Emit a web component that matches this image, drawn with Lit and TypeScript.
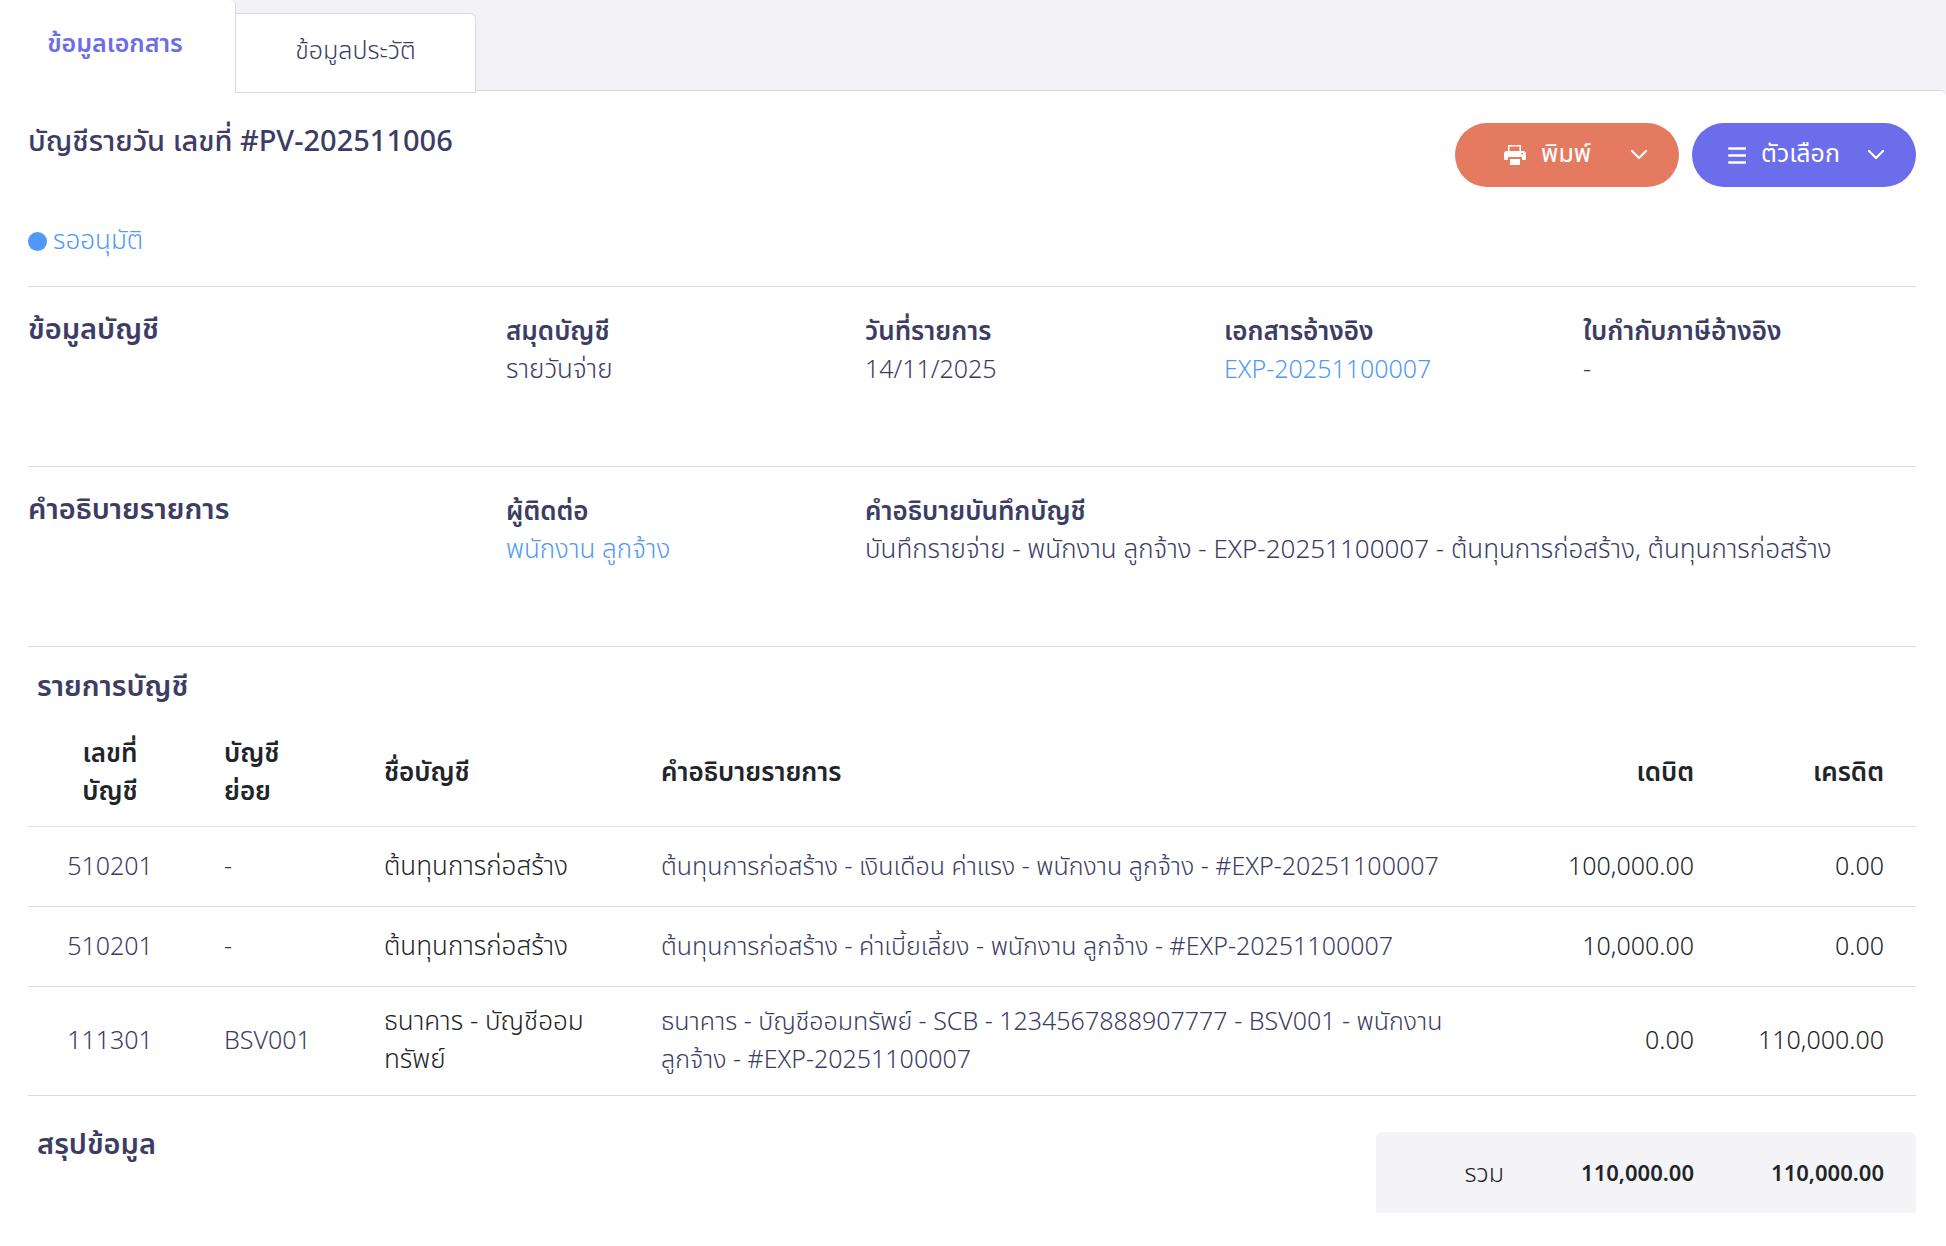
import { LitElement, html, css, svg } from "lit";
import { customElement } from "lit/decorators.js";

interface Entry {
  code: string;
  sub: string;
  name: string;
  description: string;
  debit: string;
  credit: string;
}

const entries: Entry[] = [
  {
    code: "510201",
    sub: "-",
    name: "ต้นทุนการก่อสร้าง",
    description: "ต้นทุนการก่อสร้าง - เงินเดือน ค่าแรง - พนักงาน ลูกจ้าง - #EXP-20251100007",
    debit: "100,000.00",
    credit: "0.00",
  },
  {
    code: "510201",
    sub: "-",
    name: "ต้นทุนการก่อสร้าง",
    description: "ต้นทุนการก่อสร้าง - ค่าเบี้ยเลี้ยง - พนักงาน ลูกจ้าง - #EXP-20251100007",
    debit: "10,000.00",
    credit: "0.00",
  },
  {
    code: "111301",
    sub: "BSV001",
    name: "ธนาคาร - บัญชีออมทรัพย์",
    description: "ธนาคาร - บัญชีออมทรัพย์ - SCB - 1234567888907777 - BSV001 - พนักงาน ลูกจ้าง - #EXP-20251100007",
    debit: "0.00",
    credit: "110,000.00",
  },
];

const printIcon = svg`<path fill="currentColor" fill-rule="evenodd" d="M4 0h13v6h2a3 3 0 0 1 3 3v5a1 1 0 0 1-1 1h-3v-3H4v3H1a1 1 0 0 1-1-1V9a3 3 0 0 1 3-3h1zM5.500 1.500V6h10V1.500zM17.500 8v1.500H19V8zM6 14h10v6H6z"/>`;
const menuIcon = svg`<path fill="none" stroke="currentColor" stroke-width="2.400" stroke-linecap="round" d="M1.200 2.500h16M1.200 9.500h16M1.200 16.500h16"/>`;
const chevronIcon = svg`<path fill="none" stroke="currentColor" stroke-width="2.200" stroke-linecap="round" stroke-linejoin="round" d="M1 1l7 7 7-7"/>`;

@customElement("app-root")
export class AppRoot extends LitElement {
  static styles = css`
    :host {
      display: flex;
      flex-direction: column;
      min-height: 100vh;
      background: #f3f2f7;
      color: #3c3c64;
      font-family: "Noto Sans", "Noto Sans Thai", "Noto Sans Thai UI", sans-serif;
      font-size: 25px;
      font-weight: 300;
      line-height: 38px;
    }
    * {
      box-sizing: border-box;
    }
    h1,
    h2,
    dl,
    dt,
    dd {
      margin: 0;
    }
    a {
      color: #5099fa;
      text-decoration: none;
    }
    .tabs {
      position: relative;
      display: flex;
      align-items: flex-start;
      height: 90px;
    }
    .tab {
      border: 0;
      background: #fff;
      color: inherit;
      font: inherit;
      cursor: pointer;
    }
    .tab.active {
      flex: 0 0 236px;
      height: 93px;
      padding: 0 5px 9px 0;
      border-right: 1px solid #d9d9e3;
      border-radius: 0 6px 0 0;
      color: #6c6dea;
      font-weight: 600;
    }
    .tab.idle {
      flex: 0 0 240px;
      height: 80px;
      margin-top: 13px;
      padding: 0 0 8px;
      border: 1px solid #d9d9e3;
      border-left: 0;
      border-radius: 0 6px 0 0;
    }
    .page {
      flex: 1;
      padding: 32px 30px 32px 28px;
      border-top: 1px solid #d9d9e3;
      border-radius: 0 6px 0 0;
      background: #fff;
    }
    .head {
      display: flex;
      justify-content: space-between;
      align-items: flex-start;
    }
    .title,
    .heading {
      font-size: 29px;
      font-weight: 600;
      line-height: 34px;
    }
    .title {
      font-weight: 500;
    }
    .actions {
      display: flex;
      gap: 13px;
    }
    .action {
      display: flex;
      align-items: center;
      justify-content: center;
      gap: 15px;
      width: 224px;
      height: 64px;
      padding: 0 32px 0 36px;
      border: 0;
      border-radius: 32px;
      color: #fff;
      font: inherit;
      font-weight: 400;
      cursor: pointer;
    }
    .action span {
      padding-bottom: 7px;
    }
    .print {
      background: #e47b61;
      padding-left: 49px;
    }
    .options {
      background: #6c6dea;
    }
    .chevron {
      margin-left: auto;
    }
    .status {
      display: flex;
      align-items: center;
      gap: 6px;
      padding: 37px 0 28px;
      color: #5099fa;
      font-size: 26px;
    }
    .status span {
      margin-top: -4px;
    }
    .status .dot {
      width: 19px;
      height: 19px;
      margin-top: 0;
      border-radius: 50%;
      background: #5099fa;
    }
    .section {
      display: grid;
      grid-template-columns: 452fr repeat(4, 333fr);
      column-gap: 26px;
      min-height: 180px;
      padding-top: 24px;
      border-top: 1px solid #d9d9e3;
    }
    .fields {
      display: contents;
    }
    .field {
      white-space: nowrap;
    }
    .field dt,
    .thai {
      font-size: 26px;
    }
    .field dt {
      font-weight: 600;
    }
    .wide {
      grid-column: span 3;
    }
    .lines {
      border-top: 1px solid #d9d9e3;
      padding-top: 21px;
    }
    .inset {
      padding-left: 9px;
    }
    table {
      width: 100%;
      border-collapse: separate;
      border-spacing: 0;
      table-layout: fixed;
      color: #212529;
    }
    .entries {
      margin-top: 14px;
    }
    th,
    td {
      height: 80px;
      padding: 14px 32px 18px;
      border-bottom: 1px solid #d9d9e3;
      text-align: left;
      font-weight: 300;
    }
    thead th {
      height: 111px;
      padding: 16px 32px;
      border-color: #e3e3e8;
      font-size: 26px;
      font-weight: 600;
    }
    .code {
      width: 164px;
      text-align: center;
    }
    .sub {
      width: 160px;
    }
    .name {
      width: 277px;
    }
    .money {
      width: 190px;
      text-align: right;
      padding-left: 0;
    }
    .soft {
      color: #3c3c64;
    }
    .summary {
      display: flex;
      justify-content: space-between;
      align-items: flex-start;
      padding-top: 36px;
    }
    .summary .heading {
      margin-top: -6px;
    }
    .total {
      width: 540px;
      border-radius: 6px 6px 0 0;
      background: #f4f4f6;
    }
    .total th,
    .total td {
      height: 81px;
      padding-top: 14px;
      padding-bottom: 16px;
      border: 0;
      text-align: right;
    }
    .total td {
      font-size: 22px;
      font-weight: 600;
    }
  `;

  render() {
    return html`
      <nav class="tabs" role="tablist" lang="th">
        <button class="tab active" role="tab" aria-selected="true">ข้อมูลเอกสาร</button>
        <button class="tab idle" role="tab" aria-selected="false">ข้อมูลประวัติ</button>
      </nav>
      <main class="page" lang="th">
        <header class="head">
          <h1 class="title">บัญชีรายวัน เลขที่ #PV-202511006</h1>
          <div class="actions">
            <button class="action print">
              <svg width="22" height="20" viewBox="0 0 22 20">${printIcon}</svg>
              <span>พิมพ์</span>
              <svg class="chevron" width="16" height="10" viewBox="0 0 16 10">${chevronIcon}</svg>
            </button>
            <button class="action options">
              <svg width="18" height="19" viewBox="0 0 18 19">${menuIcon}</svg>
              <span>ตัวเลือก</span>
              <svg class="chevron" width="16" height="10" viewBox="0 0 16 10">${chevronIcon}</svg>
            </button>
          </div>
        </header>
        <div class="status"><span class="dot"></span><span>รออนุมัติ</span></div>

        <section class="section">
          <h2 class="heading">ข้อมูลบัญชี</h2>
          <dl class="fields">
            <div class="field"><dt>สมุดบัญชี</dt><dd class="thai">รายวันจ่าย</dd></div>
            <div class="field"><dt>วันที่รายการ</dt><dd>14/11/2025</dd></div>
            <div class="field"><dt>เอกสารอ้างอิง</dt><dd><a href="#EXP-20251100007">EXP-20251100007</a></dd></div>
            <div class="field"><dt>ใบกำกับภาษีอ้างอิง</dt><dd>-</dd></div>
          </dl>
        </section>

        <section class="section">
          <h2 class="heading">คำอธิบายรายการ</h2>
          <dl class="fields">
            <div class="field"><dt>ผู้ติดต่อ</dt><dd class="thai"><a href="#contact">พนักงาน ลูกจ้าง</a></dd></div>
            <div class="field wide">
              <dt>คำอธิบายบันทึกบัญชี</dt>
              <dd class="thai">บันทึกรายจ่าย - พนักงาน ลูกจ้าง - EXP-20251100007 - ต้นทุนการก่อสร้าง, ต้นทุนการก่อสร้าง</dd>
            </div>
          </dl>
        </section>

        <section class="lines">
          <h2 class="heading inset">รายการบัญชี</h2>
          <table class="entries">
            <thead>
              <tr>
                <th class="code">เลขที่บัญชี</th>
                <th class="sub">บัญชีย่อย</th>
                <th class="name">ชื่อบัญชี</th>
                <th>คำอธิบายรายการ</th>
                <th class="money">เดบิต</th>
                <th class="money">เครดิต</th>
              </tr>
            </thead>
            <tbody>
              ${entries.map(
                (e) => html`<tr>
                  <td class="code soft">${e.code}</td>
                  <td class="sub soft">${e.sub}</td>
                  <td class="name thai">${e.name}</td>
                  <td class="soft">${e.description}</td>
                  <td class="money">${e.debit}</td>
                  <td class="money">${e.credit}</td>
                </tr>`,
              )}
            </tbody>
          </table>
        </section>

        <section class="summary">
          <h2 class="heading inset">สรุปข้อมูล</h2>
          <table class="total">
            <tr>
              <th scope="row">รวม</th>
              <td class="money">110,000.00</td>
              <td class="money">110,000.00</td>
            </tr>
          </table>
        </section>
      </main>
    `;
  }
}
